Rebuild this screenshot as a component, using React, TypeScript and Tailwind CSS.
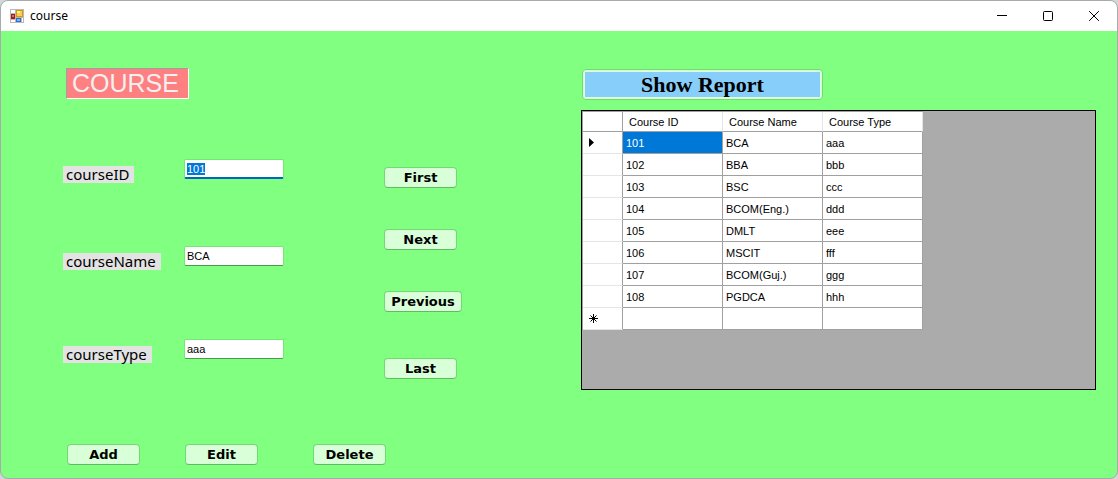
import { useEffect, useRef, useState } from "react";

const courses = [
  { id: "101", name: "BCA", type: "aaa" },
  { id: "102", name: "BBA", type: "bbb" },
  { id: "103", name: "BSC", type: "ccc" },
  { id: "104", name: "BCOM(Eng.)", type: "ddd" },
  { id: "105", name: "DMLT", type: "eee" },
  { id: "106", name: "MSCIT", type: "fff" },
  { id: "107", name: "BCOM(Guj.)", type: "ggg" },
  { id: "108", name: "PGDCA", type: "hhh" },
];

const buttonClass =
  "h-[21px] rounded-[4px] border border-[#74d874] border-b-[#62bb62] bg-[#d9ffd9] text-center font-['DejaVu_Sans',sans-serif] text-[13px] leading-[19px] font-bold text-black";
const labelClass =
  "mt-[7px] h-[17px] bg-[#e3e3e3] pl-[3px] pr-[5px] font-['Noto_Sans',sans-serif] text-[15px] leading-[17px] text-black";
const inputClass =
  "h-5 w-[100px] rounded-[2px] border border-[#74e874] border-b-[#4d994d] bg-white px-[2px] font-['Liberation_Sans',sans-serif] text-[11px] text-black outline-none selection:bg-[#0078d7] selection:text-white focus:border-b-2 focus:border-b-[#0067c0]";
const cellClass = "h-[22px] border-r border-b border-[#a0a0a0] bg-white px-[3px] text-left font-normal";

function AppIcon() {
  return (
    <svg width="14" height="14" viewBox="0 0 14 14" aria-hidden="true" shapeRendering="crispEdges">
      <rect width="14" height="14" fill="#b9b9b9" />
      <path d="M1 1h4v3H1zM1 11h4v2H1zM12 9h1v4h-1z" fill="#fff" />
      <rect x="1" y="5" width="4" height="5" fill="#a81c10" />
      <rect x="2" y="6" width="2" height="2" fill="#e06a5c" />
      <rect x="6" y="1" width="7" height="7" fill="#d69a10" />
      <rect x="7" y="2" width="5" height="5" fill="#fbd04a" />
      <rect x="7" y="2" width="3" height="2" fill="#fff0a8" />
      <rect x="6" y="9" width="5" height="4" fill="#2f6fd0" />
      <rect x="7" y="10" width="3" height="2" fill="#7db4f5" />
    </svg>
  );
}

function TitleBar() {
  return (
    <header className="flex h-[30px] items-center bg-white pl-[9px] pr-[17px]">
      <AppIcon />
      <h1 className="ml-[6px] flex-1 font-['Noto_Sans',sans-serif] text-[12px] leading-4 text-black">course</h1>
      <div className="flex gap-[35px]">
        <button aria-label="Minimize">
          <svg width="11" height="11" viewBox="0 0 11 11" className="block">
            <path d="M0 4.5h10" stroke="#000" />
          </svg>
        </button>
        <button aria-label="Maximize">
          <svg width="11" height="11" viewBox="0 0 11 11" className="block">
            <rect x="0.5" y="0.5" width="9" height="9" rx="1" fill="none" stroke="#000" />
          </svg>
        </button>
        <button aria-label="Close">
          <svg width="11" height="11" viewBox="0 0 11 11" className="block">
            <path d="M0.5 0.5l9 9M9.5 0.5l-9 9" stroke="#000" strokeLinecap="square" />
          </svg>
        </button>
      </div>
    </header>
  );
}

function CourseGrid() {
  return (
    <div className="h-[280px] border border-black bg-[#ababab]">
      <table className="table-fixed border-separate border-spacing-0 border-t border-l border-[#a0a0a0] font-['Liberation_Sans',sans-serif] text-[11px] leading-[14px] text-black">
        <colgroup>
          <col className="w-[40px]" />
          <col className="w-[100px]" />
          <col className="w-[100px]" />
          <col className="w-[100px]" />
        </colgroup>
        <thead>
          <tr>
            <td className="h-[20px] border-r border-b border-[#a0a0a0] bg-white" />
            {["Course ID", "Course Name", "Course Type"].map((title) => (
              <th
                key={title}
                scope="col"
                className="h-[20px] border-r border-b border-r-[#e5e5e5] border-b-[#a0a0a0] bg-white px-[6px] text-left font-normal"
              >
                {title}
              </th>
            ))}
          </tr>
        </thead>
        <tbody>
          {courses.map((course, index) => (
            <tr key={course.id}>
              <th scope="row" className="border-r border-b border-r-[#a0a0a0] border-b-[#e5e5e5] bg-white pl-[6px]">
                {index === 0 && (
                  <svg width="5" height="9" viewBox="0 0 5 9" className="block" role="img" aria-label="Current row">
                    <path d="M0 0l5 4.5L0 9z" fill="#000" />
                  </svg>
                )}
              </th>
              <td className={index === 0 ? "h-[22px] border-r border-b border-[#a0a0a0] bg-[#0078d7] px-[3px] text-white" : cellClass}>
                {course.id}
              </td>
              <td className={cellClass}>{course.name}</td>
              <td className={cellClass}>{course.type}</td>
            </tr>
          ))}
          <tr>
            <th scope="row" className="border-r border-b border-r-[#a0a0a0] border-b-[#e5e5e5] bg-white pl-[6px]">
              <svg width="9" height="9" viewBox="0 0 9 9" className="block" role="img" aria-label="New row">
                <path d="M4.5 0v9M0 4.5h9M1.5 1.5l6 6M7.5 1.5l-6 6" stroke="#000" />
              </svg>
            </th>
            <td className={cellClass} />
            <td className={cellClass} />
            <td className={cellClass} />
          </tr>
        </tbody>
      </table>
    </div>
  );
}

export default function App() {
  const [course, setCourse] = useState(courses[0]);
  const idRef = useRef<HTMLInputElement>(null);

  useEffect(() => {
    idRef.current?.focus();
    idRef.current?.select();
  }, []);

  return (
    <div className="min-h-screen bg-[#d5d5dc]">
      <div className="flex min-h-screen flex-col overflow-hidden rounded-lg border border-[#a9a9b0] bg-[#80ff80]">
        <TitleBar />
        <main className="flex flex-1 pr-[21px] pb-3">
          <form className="w-[580px] shrink-0 pt-[37px] pl-[62px]" onSubmit={(event) => event.preventDefault()}>
            <h2 className="ml-[3px] h-[31px] w-[123px] border border-t-[#a0a0a0] border-r-white border-b-white border-l-[#a0a0a0] bg-[#ff8080] pl-[5px] font-['Liberation_Sans',sans-serif] text-[25px] leading-[29px] text-[#f0f0f0]">
              COURSE
            </h2>
            <div className="mt-[60px] flex">
              <div className="w-[321px]">
                <div className="flex h-[87px] items-start">
                  <div className="flex w-[121px]">
                    <label htmlFor="courseID" className={labelClass}>courseID</label>
                  </div>
                  <input
                    id="courseID"
                    ref={idRef}
                    className={inputClass}
                    value={course.id}
                    onChange={(event) => setCourse({ ...course, id: event.target.value })}
                  />
                </div>
                <div className="flex h-[93px] items-start">
                  <div className="flex w-[121px]">
                    <label htmlFor="courseName" className={labelClass}>courseName</label>
                  </div>
                  <input
                    id="courseName"
                    className={inputClass}
                    value={course.name}
                    onChange={(event) => setCourse({ ...course, name: event.target.value })}
                  />
                </div>
                <div className="flex items-start">
                  <div className="flex w-[121px]">
                    <label htmlFor="courseType" className={labelClass}>courseType</label>
                  </div>
                  <input
                    id="courseType"
                    className={inputClass}
                    value={course.type}
                    onChange={(event) => setCourse({ ...course, type: event.target.value })}
                  />
                </div>
              </div>
              <div className="flex h-[220px] flex-col items-start justify-between pt-2">
                <div className="flex flex-col items-start gap-[41px]">
                  <button type="button" className={`${buttonClass} w-[73px]`}>First</button>
                  <button type="button" className={`${buttonClass} w-[73px]`}>Next</button>
                  <button type="button" className={`${buttonClass} w-[78px]`}>Previous</button>
                </div>
                <button type="button" className={`${buttonClass} w-[73px]`}>Last</button>
              </div>
            </div>
            <div className="mt-[65px] ml-1 flex">
              <button type="button" className={`${buttonClass} w-[73px]`}>Add</button>
              <button type="button" className={`${buttonClass} ml-[45px] w-[73px]`}>Edit</button>
              <button type="button" className={`${buttonClass} ml-[55px] w-[73px]`}>Delete</button>
            </div>
          </form>
          <section className="min-w-0 flex-1 pt-[38px]">
            <button
              type="button"
              className="ml-px block h-[31px] w-[241px] rounded-[4px] border border-[#74d874] bg-[#d9ffd9] p-[2px] font-['Liberation_Serif',serif] text-[22px] leading-[25px] font-bold text-black"
            >
              <span className="block bg-[#87cefa]">Show Report</span>
            </button>
            <div className="mt-[10px]">
              <CourseGrid />
            </div>
          </section>
        </main>
      </div>
    </div>
  );
}
